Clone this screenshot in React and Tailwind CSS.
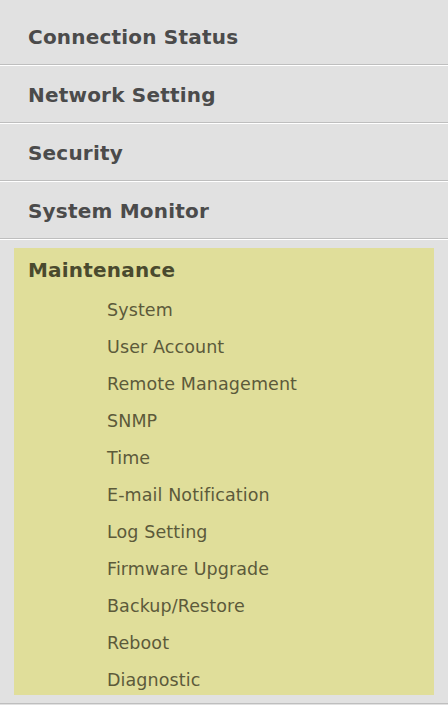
import React from "react";

const top = ["Connection Status", "Network Setting", "Security", "System Monitor"];
const subs = [
  "System",
  "User Account",
  "Remote Management",
  "SNMP",
  "Time",
  "E-mail Notification",
  "Log Setting",
  "Firmware Upgrade",
  "Backup/Restore",
  "Reboot",
  "Diagnostic",
];

const font = { fontFamily: '"DejaVu Sans", sans-serif' };

export default function App() {
  return (
    <div className="w-[448px] h-[705px] bg-[#e1e1e1] overflow-hidden" style={font}>
      {top.map((t, i) => (
        <div
          key={t}
          className={
            "flex items-center px-[28px] border-b border-[#bebebe] " +
            (i === 0 ? "h-[65px] pt-[9px]" : "h-[58px] pt-[1px] border-t border-t-white")
          }
        >
          <span className="text-[20px] font-bold text-[#4b4b4b] tracking-[0.2px]">{t}</span>
        </div>
      ))}
      <div className="border-t border-t-white pt-[8px] px-[14px] pb-[8px] border-b border-[#bebebe]">
        <div className="bg-[#e0de9a] h-[447px]">
          <div className="h-[43px] flex items-center px-[14px]">
            <span className="text-[20px] font-bold text-[#4a4a2e] tracking-[0.2px]">Maintenance</span>
          </div>
          <div className="flex flex-col pl-[93px] pt-[1px]">
            {subs.map((s) => (
              <div key={s} className="h-[37px] flex items-center">
                <span className="text-[17.5px] text-[#5c5a3a] tracking-[0.1px]">{s}</span>
              </div>
            ))}
          </div>
        </div>
      </div>
    </div>
  );
}
